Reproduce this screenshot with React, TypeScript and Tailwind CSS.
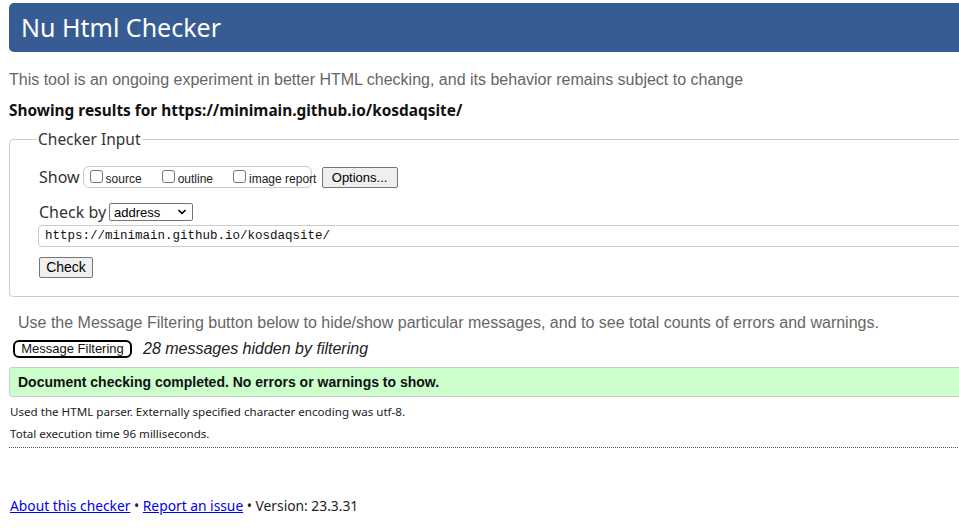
import { ChevronDown } from "lucide-react";

const sans = "font-['Noto_Sans',sans-serif]";
const arial = "font-['Liberation_Sans',Arial,sans-serif]";

function Box({ label }: { label: string }) {
  return (
    <label className="flex items-center gap-[3px] whitespace-nowrap">
      <span className="mb-[2px] inline-block size-[13px] shrink-0 rounded-[3px] border border-[#767676] bg-white" />
      <span className={`${arial} mt-[3px] text-[12px] leading-[14px] text-[#222]`}>{label}</span>
    </label>
  );
}

export default function App() {
  return (
    <div className="h-[529px] w-[959px] overflow-hidden bg-white">
      <div className="w-[1000px] pl-[9px] pt-[3px]">
        <h1 className={`${sans} flex h-[49px] items-center rounded-l-[5px] bg-[#365c93] pl-[12px] text-[25px] text-white`}>
          Nu Html Checker
        </h1>

        <p className={`${arial} mt-[18px] text-[16px] leading-[20px] text-[#666]`}>
          This tool is an ongoing experiment in better HTML checking, and its behavior remains subject to change
        </p>
        <p className={`${sans} mt-[10px] text-[15.4px] leading-[22px] font-bold text-[#111]`}>
          Showing results for https://minimain.github.io/kosdaqsite/
        </p>

        <fieldset className="mt-[6px] h-[169px] rounded-l-[4px] border border-[#ccc] pl-[29px]">
          <legend className={`${sans} ml-[-2px] px-[1px] text-[15.5px] text-[#333]`}>Checker Input</legend>
          <div className="mt-[15px] flex h-[22px] items-center">
            <span className={`${sans} text-[16px] leading-[20px] text-[#333]`}>Show</span>
            <div className="ml-[3px] flex h-[22px] w-[229px] items-center gap-[20px] rounded-[6px] border border-[#ccc] pl-[6px]">
              <Box label="source" />
              <Box label="outline" />
              <Box label="image report" />
            </div>
            <button className={`${arial} ml-[10px] h-[21px] w-[76px] rounded-[2px] border border-[#767676] bg-[#efefef] text-[13px] text-black`}>
              Options...
            </button>
          </div>

          <div className="mt-[14px] flex h-[20px] items-center">
            <span className={`${sans} text-[16px] leading-[20px] text-[#333]`}>Check by</span>
            <div className={`${arial} ml-[3px] flex h-[18px] w-[84px] items-center justify-between rounded-[2px] border border-[#767676] px-[4px] text-[13px] text-black`}>
              address
              <ChevronDown className="size-[12px]" strokeWidth={3.5} />
            </div>
          </div>

          <div className="ml-[-1px] mt-[3px] flex h-[22px] items-center rounded-l-[4px] border border-[#ccc] pl-[6px] font-['Liberation_Mono','DejaVu_Sans_Mono',monospace] text-[12.5px] text-[#111]">
            https://minimain.github.io/kosdaqsite/
          </div>

          <button className={`${arial} mt-[10px] h-[21px] w-[54px] rounded-[2px] border border-[#767676] bg-[#efefef] text-[14px] leading-[19px] text-black`}>
            Check
          </button>
        </fieldset>

        <p className={`${arial} ml-[9px] mt-[16px] text-[16px] leading-[20px] text-[#666]`}>
          Use the Message Filtering button below to hide/show particular messages, and to see total counts of errors and warnings.
        </p>
        <div className="mt-[4px] flex items-center">
          <button className={`${arial} ml-[4px] h-[18px] w-[119px] rounded-[6px] border-2 border-black text-[13px] leading-[14px] text-[#111]`}>
            Message Filtering
          </button>
          <span className={`${arial} ml-[11px] text-[16px] italic text-[#222]`}>28 messages hidden by filtering</span>
        </div>

        <div className={`${arial} mt-[6px] flex h-[30px] items-center rounded-l-[3px] border border-[#ccc] bg-[#ccffcc] pl-[8px] text-[14px] font-bold text-[#111]`}>
          Document checking completed. No errors or warnings to show.
        </div>

        <p className={`${sans} ml-[1px] mt-[6px] text-[11.6px] leading-[18px] text-[#222]`}>
          Used the HTML parser. Externally specified character encoding was utf-8.
        </p>
        <p className={`${sans} ml-[1px] mt-[4px] text-[11.6px] leading-[18px] text-[#222]`}>
          Total execution time 96 milliseconds.
        </p>
        <div className="mt-[4px] border-t border-dotted border-[#555]" />

        <p className={`${sans} ml-[1px] mt-[48px] text-[13.8px] text-[#222]`}>
          <a href="#" className="text-[#0000ee] underline">About this checker</a> •{" "}
          <a href="#" className="text-[#0000ee] underline">Report an issue</a> • Version: 23.3.31
        </p>
      </div>
    </div>
  );
}
